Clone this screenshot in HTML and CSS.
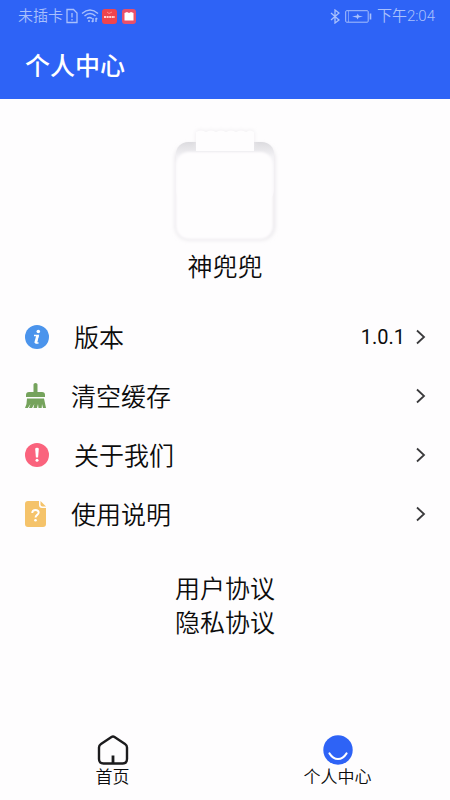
FILE: index.html
```html
<!DOCTYPE html>
<html lang="zh-CN">
<head>
<meta charset="utf-8">
<meta name="viewport" content="width=device-width, initial-scale=1">
<title>个人中心</title>
<link rel="stylesheet" href="styles.css">
</head>
<body>
<div class="app">
  <header class="top">
    <div class="status">
      <div class="status-group">
        <span>未插卡</span>
        <svg width="12" height="16" viewBox="0 0 12 16" fill="none" stroke="currentColor" stroke-width="1.3"><path d="M1 1.500h6.500L11 5v9.500H1zM6 5v4.500M6 11v1.500"/></svg>
        <svg class="wifi" width="18" height="16" viewBox="0 0 18 16" fill="none" stroke="currentColor" stroke-width="1.400"><path d="M1 5.500Q9-1.500 17 5.500M3.500 8Q9 3 14.500 8M6 10.500Q8.500 8.500 11 10.500"/><circle cx="8" cy="13" r="1" fill="currentColor" stroke="none"/><path d="M12 10v4m-1.300-1.300L12 14M15 14v-4m1.300 1.300L15 10"/></svg>
        <svg width="15" height="15" viewBox="0 0 15 15"><rect width="15" height="15" rx="3" fill="#f0444d"/><path d="M2 8h11" stroke="#ffd2d2" stroke-width="1.800" stroke-dasharray="2 .6"/><path d="M5 3l2 1.500L10 3" fill="none" stroke="#ff8f8f"/></svg>
        <svg class="book" width="14" height="15" viewBox="0 0 14 15"><rect width="14" height="15" rx="3" fill="#e8506a"/><path d="M2.500 4L5 3l2 1 2-1 2.500 1v7.500h-9z" fill="#fff"/></svg>
      </div>
      <div class="status-group">
        <svg width="10" height="15" viewBox="0 0 10 15" fill="none" stroke="currentColor" stroke-width="1.300"><path d="M1 4l8 7-4 3V1l4 3-8 7"/></svg>
        <svg class="battery" width="27" height="13" viewBox="0 0 27 13" fill="none" stroke="currentColor"><rect x=".7" y=".7" width="22.500" height="11.500" rx="1"/><path d="M3.500 1v11" opacity=".6"/><path d="M25.500 3.500v6" stroke-width="1.600"/><path d="M7 6.500l5-1 .5-2 1.500 2.300 4 .7-4.500 1-.8 2-1.200-2z" fill="currentColor" stroke="none"/></svg>
        <span>下午2:04</span>
      </div>
    </div>
    <h1>个人中心</h1>
  </header>
  <main>
    <section class="profile">
      <svg width="110" height="120" viewBox="0 0 110 120" aria-hidden="true">
        <defs>
          <linearGradient id="shade" x1="0" y1="0" x2="0" y2="1"><stop offset="0" stop-color="#dcdbdf"/><stop offset=".24" stop-color="#f3f2f5"/><stop offset="1" stop-color="#f7f6f8"/></linearGradient>
          <filter id="soft" x="-20%" y="-20%" width="140%" height="140%"><feGaussianBlur stdDeviation="2"/></filter>
          <filter id="edge" x="-20%" y="-20%" width="140%" height="140%"><feGaussianBlur stdDeviation="1"/></filter>
        </defs>
        <rect x="5" y="19" width="100" height="96" rx="14" fill="#e7e5e9" filter="url(#soft)"/>
        <rect x="6" y="17" width="98" height="60" rx="12" fill="url(#shade)"/>
        <rect x="6" y="27" width="97" height="87" rx="13" fill="#fefdfe" filter="url(#edge)"/>
        <path d="M26 7q5-4 10 0 5-4 10 0 5-4 10 0 5-4 10 0 5-4 10 0 5-4 8 0v16H26z" fill="#eeecef" filter="url(#soft)"/>
        <path d="M26 7q5-3 10 0 5-3 10 0 5-3 10 0 5-3 10 0 5-3 10 0 4-3 8 0v19H26z" fill="#fefdfe"/>
      </svg>
      <h2>神兜兜</h2>
    </section>
    <nav class="menu" aria-label="设置">
      <a href="#version">
        <svg width="24" height="24" viewBox="0 0 24 24"><circle cx="12" cy="12" r="12" fill="#4b94ec"/><circle cx="13.300" cy="6.500" r="1.800" fill="#fff"/><path d="M9 10.500h4.200l-2 7.500h2.300" fill="none" stroke="#fff" stroke-width="1.500"/><path d="M12.500 10.500l-2 7.500" stroke="#fff" stroke-width="2.500"/></svg>
        <span class="label">版本</span><span class="value">1.0.1</span>
        <svg class="chevron" width="10" height="16" viewBox="0 0 10 16"><path d="M1 1.500L8 8l-7 6.500"/></svg>
      </a>
      <a href="#cache">
        <svg width="21" height="26" viewBox="0 0 21 26" fill="#75a35c"><path d="M8.500 1.500q0-1.500 2-1.500t2 1.500V9H17q3 0 3 3v2H1v-2q0-3 3-3h4.500z"/><path d="M2 15.500h17l2 9.500h-3l-1-4-.3 4h-3.200l-.5-4-1 4H8.500l.8-4-2.300 4H4l1.500-4L2.800 25H0q2-4 2-9.500z"/></svg>
        <span class="label">清空缓存</span>
        <svg class="chevron" width="10" height="16" viewBox="0 0 10 16"><path d="M1 1.500L8 8l-7 6.500"/></svg>
      </a>
      <a href="#about">
        <svg width="24" height="24" viewBox="0 0 24 24"><circle cx="12" cy="12" r="12" fill="#fa637d"/><path d="M10.200 6q0-1.200 1.800-1.200T13.800 6l-.7 8.500h-2.200z" fill="#fff"/><circle cx="12" cy="17.300" r="1.500" fill="#fff"/></svg>
        <span class="label">关于我们</span>
        <svg class="chevron" width="10" height="16" viewBox="0 0 10 16"><path d="M1 1.500L8 8l-7 6.500"/></svg>
      </a>
      <a href="#help">
        <svg width="21" height="26" viewBox="0 0 21 26"><path d="M3 0h11v4q0 3 3 3h4v16q0 3-3 3H3q-3 0-3-3V3q0-3 3-3z" fill="#f5c36a"/><path d="M15.500 0L21 5.500h-3.500q-2 0-2-2z" fill="#f5c36a"/><path d="M7.200 12q.2-3 3.300-3t3.200 2.600c0 2.400-3.200 2.200-3.200 5" fill="none" stroke="#fff" stroke-width="1.900"/><circle cx="10.500" cy="19.200" r="1.300" fill="#fff"/></svg>
        <span class="label">使用说明</span>
        <svg class="chevron" width="10" height="16" viewBox="0 0 10 16"><path d="M1 1.500L8 8l-7 6.500"/></svg>
      </a>
    </nav>
    <div class="legal">
      <a href="#terms">用户协议</a>
      <a href="#privacy">隐私协议</a>
    </div>
  </main>
  <nav class="tabs" aria-label="主导航">
    <a href="#home">
      <svg width="32" height="30" viewBox="0 0 32 30" fill="none" stroke="#1b1b1d" stroke-width="2.400" stroke-linejoin="round"><path d="M14.500 2Q16 1 17.500 2L28 9q2 1.300 2 3.500V24q0 4.500-4.500 4.500h-19Q2 28.500 2 24V12.500Q2 10.300 4 9z"/><path d="M16 20.500V28" stroke-width="2.800"/></svg>
      <span>首页</span>
    </a>
    <a href="#me" aria-current="page">
      <svg width="30" height="30" viewBox="0 0 30 30"><circle cx="15" cy="15" r="14.700" fill="#2e63f6"/><path d="M6.500 18.500Q10 24 15 24t8.500-5.500" fill="none" stroke="#fff" stroke-width="2.200" stroke-linecap="round"/></svg>
      <span>个人中心</span>
    </a>
  </nav>
</div>
</body>
</html>
```
FILE: styles.css
```css
* {
  box-sizing: border-box;
}

body {
  margin: 0;
  background: #fefdfe;
  color: #0c0c0c;
  font-family: Roboto, "Noto Sans CJK SC", sans-serif;
  font-weight: 350;
}

a {
  color: inherit;
  text-decoration: none;
}

svg {
  display: block;
  flex: none;
}

.app {
  display: flex;
  flex-direction: column;
  min-height: 100vh;
}

.top {
  background: #2e63f6;
  color: #fff;
  padding-bottom: 15px;
}

.status {
  display: flex;
  justify-content: space-between;
  padding: 4px 15px 0 18px;
  color: #a9c0fc;
  font-size: 15px;
  line-height: 24px;
}

.status-group {
  display: flex;
  align-items: center;
  gap: 3px;
}

.book {
  margin-left: 2px;
}

.battery {
  margin: 0 2px;
}

h1 {
  margin: 21px 25px 0;
  font-size: 25px;
  line-height: 35px;
  font-weight: 500;
}

main {
  flex: 1;
}

.profile {
  display: flex;
  flex-direction: column;
  align-items: center;
  padding-top: 26px;
}

h2 {
  margin: 5px 0 0;
  font-size: 25px;
  line-height: 36px;
  font-weight: 350;
}

.menu {
  padding-top: 21px;
}

.menu a {
  display: flex;
  align-items: center;
  gap: 25px;
  min-height: 59px;
  padding: 0 24px 0 25px;
}

.label {
  flex: 1;
  padding-top: 4px;
  font-size: 25px;
  line-height: 36px;
}

.value {
  margin-right: -14px;
  font-size: 20px;
  font-weight: 400;
}

.chevron {
  fill: none;
  stroke: #3a3a3c;
  stroke-width: 1.8;
}

.legal {
  display: flex;
  flex-direction: column;
  align-items: center;
  padding: 30px 0;
  font-size: 25px;
  line-height: 34px;
}

.tabs {
  display: grid;
  grid-template-columns: 1fr 1fr;
  padding-bottom: 12px;
}

.tabs a {
  display: flex;
  flex-direction: column;
  align-items: center;
  gap: 1px;
  font-size: 17px;
  line-height: 22px;
}
```
